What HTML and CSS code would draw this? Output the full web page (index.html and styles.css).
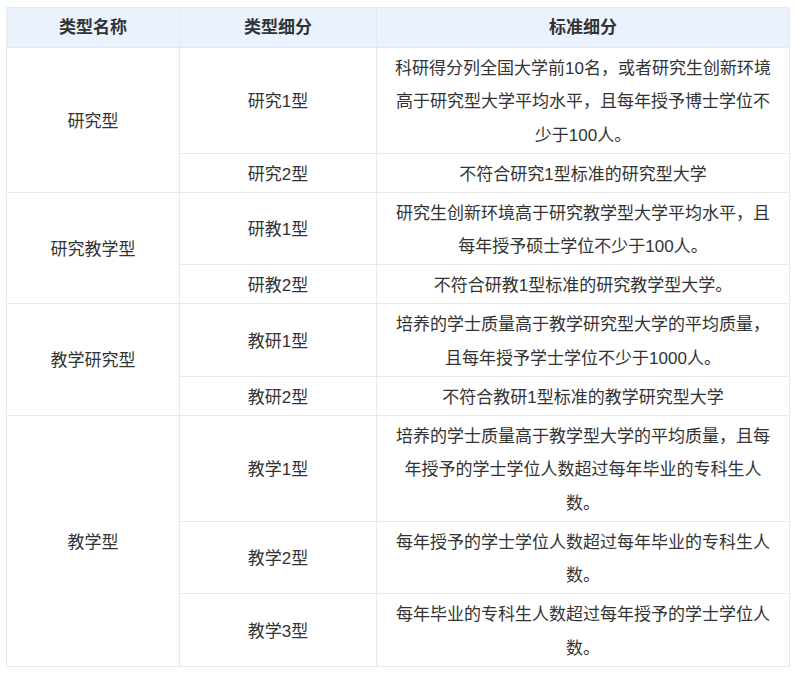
FILE: index.html
```html
<!DOCTYPE html>
<html lang="zh-CN">
<head>
<meta charset="utf-8">
<title>大学类型</title>
<link rel="stylesheet" href="styles.css">
</head>
<body>
<table class="grid">
  <colgroup>
    <col class="c1">
    <col class="c2">
    <col class="c3">
  </colgroup>
  <thead>
    <tr><th>类型名称</th><th>类型细分</th><th>标准细分</th></tr>
  </thead>
  <tbody>
    <tr>
      <td rowspan="2">研究型</td>
      <td>研究1型</td>
      <td>科研得分列全国大学前10名，或者研究生创新环境<br>高于研究型大学平均水平，且每年授予博士学位不<br>少于100人。</td>
    </tr>
    <tr>
      <td>研究2型</td>
      <td>不符合研究1型标准的研究型大学</td>
    </tr>
    <tr>
      <td rowspan="2">研究教学型</td>
      <td>研教1型</td>
      <td>研究生创新环境高于研究教学型大学平均水平，且<br>每年授予硕士学位不少于100人。</td>
    </tr>
    <tr>
      <td>研教2型</td>
      <td>不符合研教1型标准的研究教学型大学。</td>
    </tr>
    <tr>
      <td rowspan="2">教学研究型</td>
      <td>教研1型</td>
      <td>培养的学士质量高于教学研究型大学的平均质量，<br>且每年授予学士学位不少于1000人。</td>
    </tr>
    <tr>
      <td>教研2型</td>
      <td>不符合教研1型标准的教学研究型大学</td>
    </tr>
    <tr>
      <td rowspan="3">教学型</td>
      <td>教学1型</td>
      <td>培养的学士质量高于教学型大学的平均质量，且每<br>年授予的学士学位人数超过每年毕业的专科生人<br>数。</td>
    </tr>
    <tr>
      <td>教学2型</td>
      <td>每年授予的学士学位人数超过每年毕业的专科生人<br>数。</td>
    </tr>
    <tr>
      <td>教学3型</td>
      <td>每年毕业的专科生人数超过每年授予的学士学位人<br>数。</td>
    </tr>
  </tbody>
</table>
</body>
</html>
```

FILE: styles.css
```css
html, body {
  margin: 0;
  padding: 0;
  background: #ffffff;
}

body {
  padding: 7px 0 0 6px;
  font-family: "Liberation Sans", "Noto Sans CJK SC", sans-serif;
  font-size: 17px;
  color: #333333;
}

.grid {
  border-collapse: collapse;
  table-layout: fixed;
  width: 783px;
}

.c1 { width: 173px; }
.c2 { width: 197px; }
.c3 { width: 413px; }

.grid th,
.grid td {
  border: 1px solid #e9e9e9;
  text-align: center;
  vertical-align: middle;
  line-height: 33.5px;
  white-space: nowrap;
}

.grid th {
  background: #eaf3fd;
  font-weight: bold;
  padding: 2.5px 0 2.5px 0;
}

.grid td {
  padding: 4px 0 0.5px 0;
}
```
